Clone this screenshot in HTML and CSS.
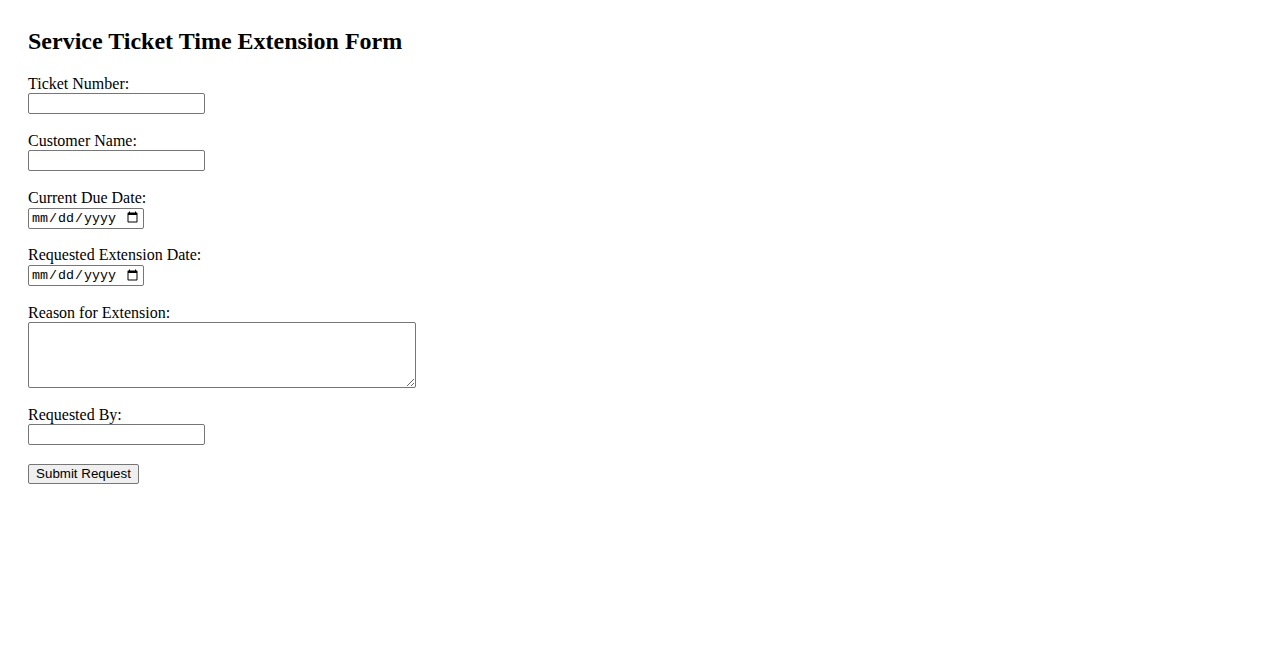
FILE: index.html
```html
<!DOCTYPE html>
<html lang="en">
<head>
<meta charset="utf-8">
<title>Service Ticket Time Extension Form</title>
<link rel="stylesheet" href="styles.css">
</head>
<body>
<div class="page">
  <h2 class="title">Service Ticket Time Extension Form</h2>
  <form class="form">
    <div class="group">
      <label class="label" for="ticket">Ticket Number:</label>
      <input class="field text" type="text" id="ticket">
    </div>
    <div class="group">
      <label class="label" for="customer">Customer Name:</label>
      <input class="field text" type="text" id="customer">
    </div>
    <div class="group">
      <label class="label" for="due">Current Due Date:</label>
      <input class="field date" type="date" id="due">
    </div>
    <div class="group">
      <label class="label" for="ext">Requested Extension Date:</label>
      <input class="field date" type="date" id="ext">
    </div>
    <div class="group">
      <label class="label" for="reason">Reason for Extension:</label>
      <textarea class="field area" id="reason"></textarea>
    </div>
    <div class="group">
      <label class="label" for="by">Requested By:</label>
      <input class="field text" type="text" id="by">
    </div>
    <div class="actions">
      <button class="submit" type="submit">Submit Request</button>
    </div>
  </form>
</div>
</body>
</html>
```

FILE: styles.css
```css
html, body {
  margin: 0;
  padding: 0;
  background: #ffffff;
}
body {
  font-family: "Liberation Serif", "Times New Roman", serif;
  font-size: 16px;
  color: #000000;
}
.page {
  padding: 28px;
}
.title {
  margin: 0 0 19.6px 0;
  font-size: 24px;
  font-weight: bold;
  line-height: 26px;
}
.form {
  display: flex;
  flex-direction: column;
  align-items: flex-start;
}
.group {
  display: flex;
  flex-direction: column;
  align-items: flex-start;
  margin-bottom: 16.85px;
}
.label {
  display: block;
  line-height: 18.4px;
  padding-top: 1px;
}
.field {
  box-sizing: border-box;
  margin: 0;
  border: 1px solid #767676;
  border-radius: 2px;
  background: #ffffff;
}
.text {
  width: 177px;
  height: 21px;
  padding: 1px 2px;
  font-family: "Liberation Sans", Arial, sans-serif;
  font-size: 13.33px;
}
.date {
  width: 116px;
  height: 21px;
  padding: 1px 2px;
  font-family: "Liberation Mono", monospace;
  font-size: 13.33px;
}
.area {
  width: 388px;
  height: 66px;
  padding: 2px;
  font-family: "Liberation Mono", monospace;
  font-size: 13.33px;
  resize: both;
}
.actions {
  margin-top: 1.6px;
}
.submit {
  box-sizing: border-box;
  width: 111px;
  height: 20px;
  margin: 0;
  padding: 1px 6px;
  font-family: "Liberation Sans", Arial, sans-serif;
  font-size: 13.33px;
  color: #000000;
  background: #efefef;
  border: 1px solid #767676;
  border-radius: 2px;
}
```
